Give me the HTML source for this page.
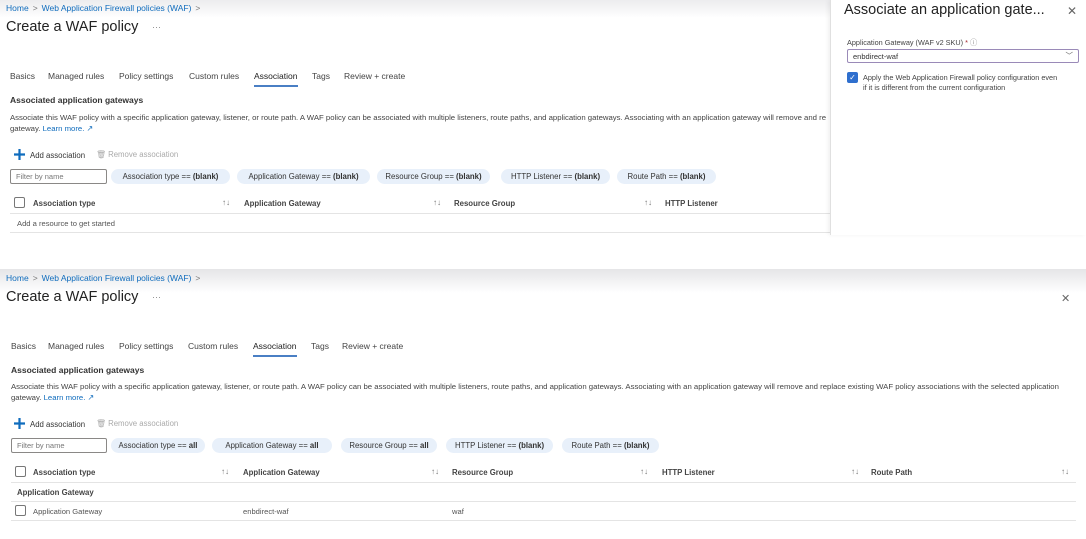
<!DOCTYPE html>
<html><head><meta charset="utf-8"><style>
*{margin:0;padding:0;box-sizing:border-box}
body{width:1086px;height:539px;overflow:hidden;background:#fff;font-family:"Liberation Sans",sans-serif;color:#323130;position:relative}
.a{position:absolute;white-space:nowrap}
.bc{font-size:8.5px;color:#0f6cbd}
.bc span{color:#777;margin:0 4px}
.t{font-size:14.5px;color:#222}
.dots{font-size:9px;color:#888}
.tab{font-size:8.5px;color:#444}
.h{font-size:8.5px;font-weight:bold;color:#333}
.d{font-size:7.75px;color:#444;line-height:11px}
.d a{color:#0f6cbd}
.tb{font-size:7.8px;color:#333}
.tbg{font-size:7.8px;color:#aaa}
.fb{border:1px solid #8a8886;height:15px;font-size:7.5px;color:#777;padding:2px 5px;border-radius:2px}
.chip{background:#e8f0fa;border-radius:8px;height:15px;font-size:7.8px;color:#333;text-align:center;line-height:15px}
.cb{width:11px;height:11px;border:1px solid #777;border-radius:2px}
.th{font-size:7.8px;font-weight:bold;color:#444}
.srt{font-size:8px;color:#777}
.td{font-size:7.6px;color:#555}
.ln{height:1px;background:#e4e4e4}
.plus{width:11px;height:11px}
</style></head><body>
<div class="a" style="left:0;top:0;width:1086px;height:18px;background:linear-gradient(#ececee,#fff)"></div>
<div class="a bc" style="left:6px;top:3px">Home<span>&gt;</span>Web Application Firewall policies (WAF)<span>&gt;</span></div>
<div class="a t" style="left:6px;top:19px">Create a WAF policy</div>
<div class="a dots" style="left:152px;top:22px">···</div>
<div class="a tab" style="left:10px;top:71px">Basics</div>
<div class="a tab" style="left:48px;top:71px">Managed rules</div>
<div class="a tab" style="left:119px;top:71px">Policy settings</div>
<div class="a tab" style="left:189px;top:71px">Custom rules</div>
<div class="a tab" style="left:254px;top:71px;color:#222">Association</div>
<div class="a" style="left:254px;top:85px;width:44px;height:2px;background:#4a7fc4"></div>
<div class="a tab" style="left:312px;top:71px">Tags</div>
<div class="a tab" style="left:344px;top:71px">Review + create</div>
<div class="a h" style="left:10px;top:95px">Associated application gateways</div>
<div class="a d" style="left:10px;top:112px">Associate this WAF policy with a specific application gateway, listener, or route path. A WAF policy can be associated with multiple listeners, route paths, and application gateways. Associating with an application gateway will remove and re<br>gateway. <a>Learn more. ↗</a></div>
<svg class="a plus" style="left:14px;top:149px" viewBox="0 0 11 11"><path d="M5.5 0v11M0 5.5h11" stroke="#0f6cbd" stroke-width="2.2"/></svg>
<div class="a tb" style="left:30px;top:151px">Add association</div>
<div class="a tbg" style="left:96px;top:150px">🗑 Remove association</div>
<div class="a fb" style="left:10px;top:169px;width:97px">Filter by name</div>
<div class="a chip" style="left:111px;top:169px;width:119px">Association type == <b>(blank)</b></div>
<div class="a chip" style="left:237px;top:169px;width:133px">Application Gateway == <b>(blank)</b></div>
<div class="a chip" style="left:377px;top:169px;width:113px">Resource Group == <b>(blank)</b></div>
<div class="a chip" style="left:501px;top:169px;width:109px">HTTP Listener == <b>(blank)</b></div>
<div class="a chip" style="left:617px;top:169px;width:99px">Route Path == <b>(blank)</b></div>
<div class="a cb" style="left:14px;top:197px"></div>
<div class="a th" style="left:33px;top:199px">Association type</div>
<div class="a srt" style="left:222px;top:198px">↑↓</div>
<div class="a th" style="left:244px;top:199px">Application Gateway</div>
<div class="a srt" style="left:433px;top:198px">↑↓</div>
<div class="a th" style="left:454px;top:199px">Resource Group</div>
<div class="a srt" style="left:644px;top:198px">↑↓</div>
<div class="a th" style="left:665px;top:199px">HTTP Listener</div>
<div class="a ln" style="left:10px;top:213px;width:820px"></div>
<div class="a td" style="left:17px;top:219px">Add a resource to get started</div>
<div class="a ln" style="left:10px;top:232px;width:820px"></div>
<!-- flyout -->
<div class="a" style="left:830px;top:0;width:256px;height:235px;background:#fff;border-left:1px solid #e0e0e0;box-shadow:-2px 0 4px rgba(0,0,0,.06)"></div>
<div class="a" style="left:844px;top:2px;font-size:14.5px;color:#222">Associate an application gate...</div>
<div class="a" style="left:1067px;top:4px;font-size:12px;color:#666">✕</div>
<div class="a" style="left:847px;top:38px;font-size:7.3px;color:#444">Application Gateway (WAF v2 SKU) <span style="color:#a4262c">*</span> <span style="color:#888">ⓘ</span></div>
<div class="a" style="left:847px;top:49px;width:232px;height:14px;border:1px solid #9a8ab8;border-radius:2px;font-size:7.5px;color:#333;padding:2px 5px">enbdirect-waf<span style="position:absolute;right:5px;top:0;color:#666">﹀</span></div>
<div class="a" style="left:847px;top:72px;width:11px;height:11px;background:#2f6fce;border-radius:2px;color:#fff;font-size:8px;text-align:center;line-height:11px">✓</div>
<div class="a" style="left:863px;top:73px;font-size:7.3px;color:#444;line-height:9.5px">Apply the Web Application Firewall policy configuration even<br>if it is different from the current configuration</div>
<!-- separator -->
<div class="a" style="left:0;top:269px;width:1086px;height:24px;background:linear-gradient(#e5e5e7,#fff)"></div>
<!-- bottom -->
<div class="a bc" style="left:6px;top:273px">Home<span>&gt;</span>Web Application Firewall policies (WAF)<span>&gt;</span></div>
<div class="a t" style="left:6px;top:289px">Create a WAF policy</div>
<div class="a dots" style="left:152px;top:292px">···</div>
<div class="a" style="left:1061px;top:292px;font-size:11px;color:#666">✕</div>
<div class="a tab" style="left:11px;top:341px">Basics</div>
<div class="a tab" style="left:48px;top:341px">Managed rules</div>
<div class="a tab" style="left:119px;top:341px">Policy settings</div>
<div class="a tab" style="left:188px;top:341px">Custom rules</div>
<div class="a tab" style="left:253px;top:341px;color:#222">Association</div>
<div class="a" style="left:253px;top:355px;width:44px;height:2px;background:#4a7fc4"></div>
<div class="a tab" style="left:311px;top:341px">Tags</div>
<div class="a tab" style="left:342px;top:341px">Review + create</div>
<div class="a h" style="left:11px;top:365px">Associated application gateways</div>
<div class="a d" style="left:11px;top:381px">Associate this WAF policy with a specific application gateway, listener, or route path. A WAF policy can be associated with multiple listeners, route paths, and application gateways. Associating with an application gateway will remove and replace existing WAF policy associations with the selected application<br>gateway. <a>Learn more. ↗</a></div>
<svg class="a plus" style="left:14px;top:418px" viewBox="0 0 11 11"><path d="M5.5 0v11M0 5.5h11" stroke="#0f6cbd" stroke-width="2.2"/></svg>
<div class="a tb" style="left:30px;top:420px">Add association</div>
<div class="a tbg" style="left:96px;top:419px">🗑 Remove association</div>
<div class="a fb" style="left:11px;top:438px;width:96px">Filter by name</div>
<div class="a chip" style="left:111px;top:438px;width:94px">Association type == <b>all</b></div>
<div class="a chip" style="left:212px;top:438px;width:120px">Application Gateway == <b>all</b></div>
<div class="a chip" style="left:341px;top:438px;width:96px">Resource Group == <b>all</b></div>
<div class="a chip" style="left:446px;top:438px;width:107px">HTTP Listener == <b>(blank)</b></div>
<div class="a chip" style="left:562px;top:438px;width:97px">Route Path == <b>(blank)</b></div>
<div class="a cb" style="left:15px;top:466px"></div>
<div class="a th" style="left:33px;top:468px">Association type</div>
<div class="a srt" style="left:221px;top:467px">↑↓</div>
<div class="a th" style="left:243px;top:468px">Application Gateway</div>
<div class="a srt" style="left:431px;top:467px">↑↓</div>
<div class="a th" style="left:452px;top:468px">Resource Group</div>
<div class="a srt" style="left:640px;top:467px">↑↓</div>
<div class="a th" style="left:662px;top:468px">HTTP Listener</div>
<div class="a srt" style="left:851px;top:467px">↑↓</div>
<div class="a th" style="left:871px;top:468px">Route Path</div>
<div class="a srt" style="left:1061px;top:467px">↑↓</div>
<div class="a ln" style="left:11px;top:482px;width:1065px"></div>
<div class="a th" style="left:17px;top:488px">Application Gateway</div>
<div class="a ln" style="left:11px;top:501px;width:1065px"></div>
<div class="a cb" style="left:15px;top:505px"></div>
<div class="a td" style="left:33px;top:507px">Application Gateway</div>
<div class="a td" style="left:243px;top:507px">enbdirect-waf</div>
<div class="a td" style="left:452px;top:507px">waf</div>
<div class="a ln" style="left:11px;top:520px;width:1065px"></div>
</body></html>
